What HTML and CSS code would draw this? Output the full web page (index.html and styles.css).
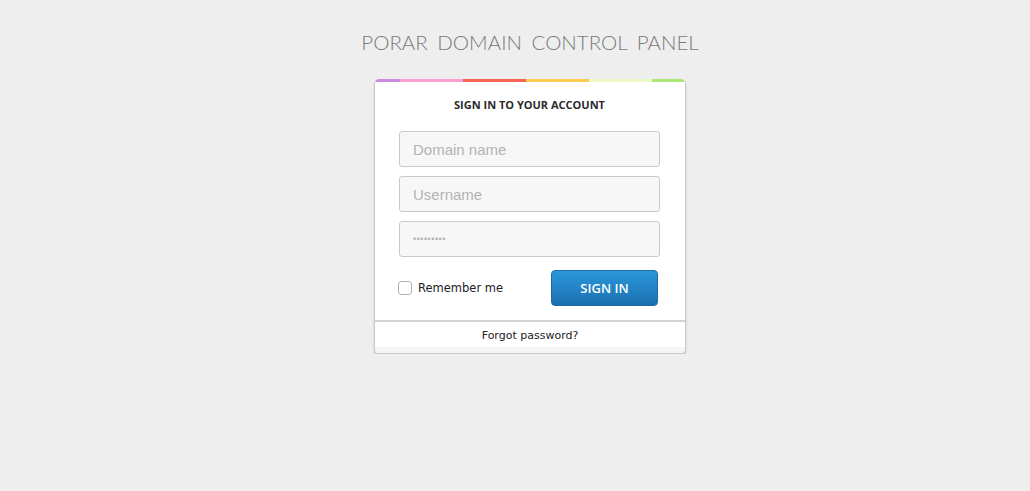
FILE: index.html
```html
<!DOCTYPE html>
<html>
<head>
<meta charset="utf-8">
<link rel="stylesheet" href="styles.css">
</head>
<body>
<div class="page">
  <h1 class="title">PORAR DOMAIN CONTROL PANEL</h1>
  <div class="card">
    <div class="stripe">
      <span class="s1"></span><span class="s2"></span><span class="s3"></span><span class="s4"></span><span class="s5"></span><span class="s6"></span>
    </div>
    <div class="body">
      <h2 class="heading">SIGN IN TO YOUR ACCOUNT</h2>
      <div class="fields">
        <input class="field" type="text" placeholder="Domain name">
        <input class="field" type="text" placeholder="Username">
        <input class="field" type="password" value="password1">
      </div>
      <div class="actions">
        <label class="remember"><span class="box"></span>Remember me</label>
        <button class="btn">SIGN IN</button>
      </div>
    </div>
    <div class="foot">Forgot password?</div>
  </div>
</div>
</body>
</html>
```
FILE: styles.css
```css
html, body {
  margin: 0;
  padding: 0;
  background: #eeeeee;
}
.page {
  display: flex;
  flex-direction: column;
  align-items: center;
  padding-top: 30px;
  padding-left: 30px;
}
.title {
  margin: 0;
  font-family: "Lato", "Liberation Sans", sans-serif;
  font-weight: 300;
  font-size: 20.5px;
  letter-spacing: 0;
  word-spacing: 4px;
  color: #7a7a7a;
  line-height: 24px;
}
.card {
  margin-top: 25px;
  width: 310px;
  background: #fff;
  border: 1px solid #c8c8c8;
  border-top: none;
  border-radius: 5px;
  box-shadow: 0 2px 2px rgba(0,0,0,0.18);
  overflow: hidden;
}
.stripe {
  display: flex;
  height: 3px;
}
.stripe span { display: block; height: 3px; }
.s1 { width: 25px; background: #c98ae0; }
.s2 { width: 63px; background: #fda0d2; }
.s3 { width: 63px; background: #f76451; }
.s4 { width: 63px; background: #fccc4e; }
.s5 { width: 63px; background: #ebfac7; }
.s6 { flex: 1; background: #ace878; }
.body {
  padding: 0 25px 14px 24px;
}
.heading {
  margin: 15px 0 0;
  text-align: center;
  font-family: "Open Sans", "Liberation Sans", sans-serif;
  font-weight: 700;
  font-size: 11px;
  letter-spacing: 0;
  color: #2a2a2a;
  line-height: 16px;
}
.fields {
  display: flex;
  flex-direction: column;
  gap: 9px;
  margin-top: 18px;
}
.field {
  box-sizing: border-box;
  width: 261px;
  height: 36px;
  margin: 0;
  padding: 0 13px;
  border: 1px solid #c9c9c9;
  border-radius: 3px;
  background: #f7f7f7;
  font-family: "Liberation Sans", sans-serif;
  font-size: 15px;
  color: #b0b0b0;
  outline: none;
}
.field[type=password] {
  font-size: 9px;
  letter-spacing: 0.5px;
}
.field::placeholder {
  color: #b3b3b3;
}
.actions {
  display: flex;
  justify-content: space-between;
  align-items: center;
  margin-top: 13px;
}
.remember {
  display: flex;
  align-items: center;
  font-family: "DejaVu Sans", sans-serif;
  font-size: 11.5px;
  color: #222;
  letter-spacing: 0;
}
.box {
  box-sizing: border-box;
  width: 14px;
  height: 14px;
  border: 1px solid #b5b5b5;
  border-radius: 3px;
  background: #fff;
  margin-right: 6px;
  margin-left: -1px;
}
.btn {
  width: 107px;
  height: 36px;
  margin-right: 2px;
  border: 1px solid #1b6aa4;
  border-radius: 4px;
  background: linear-gradient(#2b97db, #1b70b0);
  color: #fff;
  font-family: "Open Sans", "Liberation Sans", sans-serif;
  font-weight: 600;
  font-size: 13px;
  padding: 0;
}
.foot {
  border-top: 2px solid #d2d2d2;
  text-align: center;
  font-family: "DejaVu Sans", sans-serif;
  font-size: 11px;
  color: #222;
  letter-spacing: 0;
  line-height: 14px;
  padding: 7px 0 4px;
  border-bottom: 6px solid #f5f5f5;
}
```
